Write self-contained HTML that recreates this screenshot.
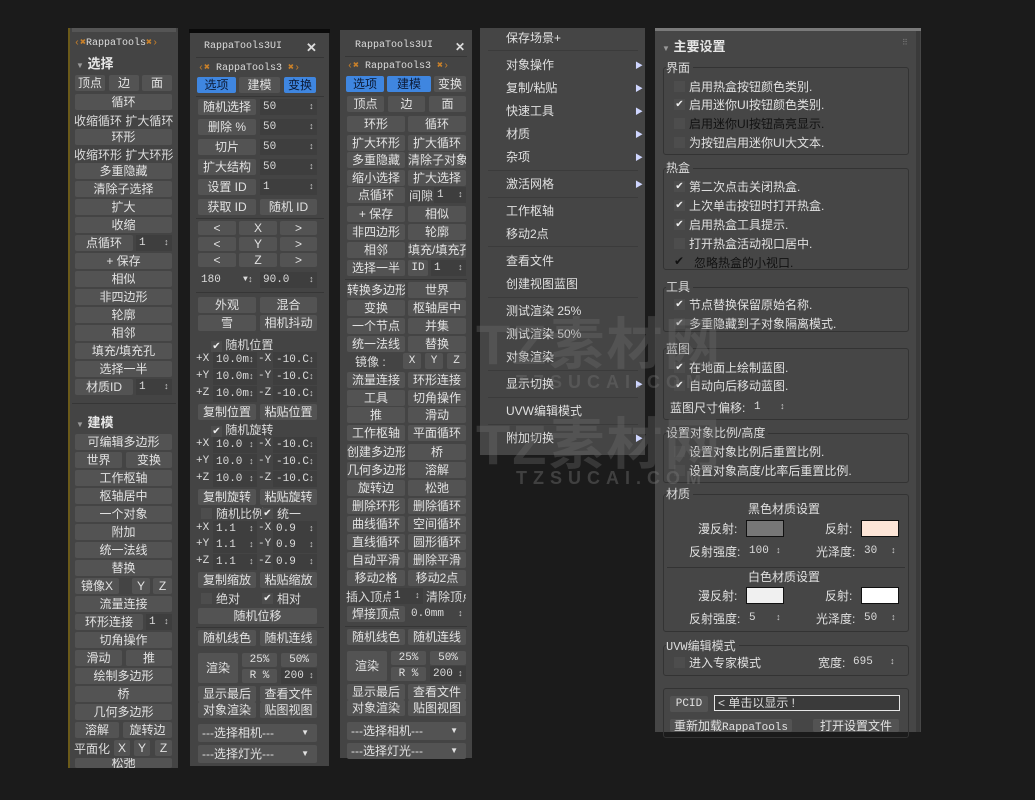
<!DOCTYPE html>
<html><head><meta charset="utf-8">
<style>
*{margin:0;padding:0;box-sizing:border-box}
body{width:1035px;height:800px;background:#1b1b1b;position:relative;overflow:hidden;font-family:"Liberation Sans","Noto Sans CJK SC",sans-serif;font-size:12px;color:#dcdcdc}
.p{position:absolute;background:#444}
.a{position:absolute;white-space:nowrap}
.b{position:absolute;height:16px;background:#535353;border-radius:2px;text-align:center;line-height:16px;white-space:nowrap;overflow:hidden;color:#e2e2e2}
.bl{background:#3f86e0;color:#0c1a35}
.s{position:absolute;height:16px;background:#3e3e3e;line-height:16px;padding-left:3px;white-space:nowrap;overflow:hidden;font-family:"Liberation Mono",monospace;font-size:11px}
.s:after{content:"\2195";position:absolute;right:3px;top:0;font-size:9px;color:#ccc}
.sep{position:absolute;height:1px;background:#363636}
.h{position:absolute;font-weight:bold;font-size:13px;color:#e6e6e6}
.mono{font-family:"Liberation Mono","Noto Sans CJK SC",monospace;font-size:11px}
.g{position:absolute;border:1px solid #333;border-radius:3px}
.gl{position:absolute;background:#464646;padding-right:3px;font-size:12px}
.cb{position:absolute;width:11px;height:11px;background:#4d4d4d;font-size:10px;line-height:11px;text-align:center;color:#eee}
.ci{position:absolute;white-space:nowrap;color:#e0e0e0}
.m{position:absolute;left:506px;font-size:12px;color:#e0e0e0}
.ar{position:absolute;left:635px;font-size:8px;color:#cfd6ff}
.ms{position:absolute;left:488px;width:150px;height:1px;background:#3b3b3b}
</style></head><body>

<!-- Panel 1 -->
<div class="p" style="left:68px;top:28px;width:110px;height:740px"></div>
<div class="a" style="left:68px;top:28px;width:2px;height:740px;background:#6b5a1a"></div>
<div class="a" style="left:72px;top:28px;width:104px;height:4px;background:#555"></div>
<div class="a mono" style="left:74px;top:37px;font-size:10px;color:#ddd"><span style="color:#c8802a">‹✖</span>RappaTools<span style="color:#c8802a">✖›</span></div>
<div class="h" style="left:76px;top:53px"><span style="font-size:8px;color:#999">▼</span> 选择</div>
<div class="b" style="left:75px;top:75px;width:30px">顶点</div><div class="b" style="left:109px;top:75px;width:30px">边</div><div class="b" style="left:142px;top:75px;width:30px">面</div>
<div class="b" style="left:75px;top:94px;width:97px">循环</div>
<div class="a" style="left:74px;top:112px">收缩循环 扩大循环</div>
<div class="b" style="left:75px;top:129px;width:97px">环形</div>
<div class="a" style="left:74px;top:146px">收缩环形 扩大环形</div>
<div class="b" style="left:75px;top:163px;width:97px">多重隐藏</div>
<div class="b" style="left:75px;top:181px;width:97px">清除子选择</div>
<div class="b" style="left:75px;top:199px;width:97px">扩大</div>
<div class="b" style="left:75px;top:217px;width:97px">收缩</div>
<div class="b" style="left:75px;top:235px;width:58px">点循环</div><div class="s" style="left:136px;top:235px;width:36px">1</div>
<div class="b" style="left:75px;top:253px;width:97px">+ 保存</div>
<div class="b" style="left:75px;top:271px;width:97px">相似</div>
<div class="b" style="left:75px;top:289px;width:97px">非四边形</div>
<div class="b" style="left:75px;top:307px;width:97px">轮廓</div>
<div class="b" style="left:75px;top:325px;width:97px">相邻</div>
<div class="b" style="left:75px;top:343px;width:97px">填充/填充孔</div>
<div class="b" style="left:75px;top:361px;width:97px">选择一半</div>
<div class="b" style="left:75px;top:379px;width:58px">材质ID</div><div class="s" style="left:136px;top:379px;width:36px">1</div>
<div class="sep" style="left:72px;top:403px;width:104px"></div>
<div class="h" style="left:76px;top:412px"><span style="font-size:8px;color:#999">▼</span> 建模</div>
<div class="b" style="left:75px;top:434px;width:97px">可编辑多边形</div>
<div class="b" style="left:75px;top:452px;width:47px">世界</div><div class="b" style="left:126px;top:452px;width:46px">变换</div>
<div class="b" style="left:75px;top:470px;width:97px">工作枢轴</div>
<div class="b" style="left:75px;top:488px;width:97px">枢轴居中</div>
<div class="b" style="left:75px;top:506px;width:97px">一个对象</div>
<div class="b" style="left:75px;top:524px;width:97px">附加</div>
<div class="b" style="left:75px;top:542px;width:97px">统一法线</div>
<div class="b" style="left:75px;top:560px;width:97px">替换</div>
<div class="b" style="left:75px;top:578px;width:44px">镜像X</div><div class="b" style="left:132px;top:578px;width:18px">Y</div><div class="b" style="left:153px;top:578px;width:19px">Z</div>
<div class="b" style="left:75px;top:596px;width:97px">流量连接</div>
<div class="b" style="left:75px;top:614px;width:68px">环形连接</div><div class="s" style="left:146px;top:614px;width:26px">1</div>
<div class="b" style="left:75px;top:632px;width:97px">切角操作</div>
<div class="b" style="left:75px;top:650px;width:47px">滑动</div><div class="b" style="left:126px;top:650px;width:46px">推</div>
<div class="b" style="left:75px;top:668px;width:97px">绘制多边形</div>
<div class="b" style="left:75px;top:686px;width:97px">桥</div>
<div class="b" style="left:75px;top:704px;width:97px">几何多边形</div>
<div class="b" style="left:75px;top:722px;width:44px">溶解</div><div class="b" style="left:123px;top:722px;width:49px">旋转边</div>
<div class="a" style="left:74px;top:740px">平面化</div><div class="b" style="left:114px;top:740px;width:16px">X</div><div class="b" style="left:134px;top:740px;width:16px">Y</div><div class="b" style="left:155px;top:740px;width:17px">Z</div>
<div class="b" style="left:75px;top:758px;width:97px;height:10px;line-height:10px">松弛</div>

<!-- Panel 2 -->
<div class="p" style="left:190px;top:30px;width:139px;height:736px"></div>
<div class="a" style="left:189px;top:29px;width:141px;height:4px;background:#0a0a0a"></div>
<div class="a mono" style="left:204px;top:41px;font-size:10px">RappaTools3UI</div>
<div class="a" style="left:306px;top:40px;font-size:13px;font-weight:bold">✕</div>
<div class="sep" style="left:196px;top:57px;width:128px"></div>
<div class="a mono" style="left:198px;top:62px;font-size:10px"><span style="color:#c8802a">‹✖</span> RappaTools3 <span style="color:#c8802a">✖›</span></div>
<div class="b bl" style="left:197px;top:77px;width:39px">选项</div><div class="b" style="left:239px;top:77px;width:41px">建模</div><div class="b bl" style="left:284px;top:77px;width:32px">变换</div>
<div class="sep" style="left:196px;top:96px;width:128px"></div>
<div class="b" style="left:198px;top:99px;width:58px">随机选择</div><div class="s" style="left:260px;top:99px;width:57px">50</div>
<div class="b" style="left:198px;top:119px;width:58px">删除 %</div><div class="s" style="left:260px;top:119px;width:57px">50</div>
<div class="b" style="left:198px;top:139px;width:58px">切片</div><div class="s" style="left:260px;top:139px;width:57px">50</div>
<div class="b" style="left:198px;top:159px;width:58px">扩大结构</div><div class="s" style="left:260px;top:159px;width:57px">50</div>
<div class="b" style="left:198px;top:179px;width:58px">设置 ID</div><div class="s" style="left:260px;top:179px;width:57px">1</div>
<div class="b" style="left:198px;top:199px;width:58px">获取 ID</div><div class="b" style="left:260px;top:199px;width:57px">随机 ID</div>
<div class="sep" style="left:196px;top:218px;width:128px"></div>
<div class="b" style="left:198px;top:221px;width:38px;height:14px;line-height:14px">&lt;</div><div class="b" style="left:239px;top:221px;width:38px;height:14px;line-height:14px">X</div><div class="b" style="left:280px;top:221px;width:37px;height:14px;line-height:14px">&gt;</div>
<div class="b" style="left:198px;top:237px;width:38px;height:14px;line-height:14px">&lt;</div><div class="b" style="left:239px;top:237px;width:38px;height:14px;line-height:14px">Y</div><div class="b" style="left:280px;top:237px;width:37px;height:14px;line-height:14px">&gt;</div>
<div class="b" style="left:198px;top:253px;width:38px;height:14px;line-height:14px">&lt;</div><div class="b" style="left:239px;top:253px;width:38px;height:14px;line-height:14px">Z</div><div class="b" style="left:280px;top:253px;width:37px;height:14px;line-height:14px">&gt;</div>
<div class="s" style="left:198px;top:272px;width:58px;background:#444">180 <span style="position:absolute;left:45px;font-size:8px">▼</span></div><div class="s" style="left:260px;top:272px;width:57px">90.0</div>
<div class="sep" style="left:196px;top:292px;width:128px"></div>
<div class="b" style="left:198px;top:297px;width:58px">外观</div><div class="b" style="left:260px;top:297px;width:57px">混合</div>
<div class="b" style="left:198px;top:315px;width:58px">雪</div><div class="b" style="left:260px;top:315px;width:57px">相机抖动</div>
<div class="a" style="left:211px;top:336px"><span class="cb" style="position:relative;display:inline-block">✔</span> 随机位置</div>
<div class="a mono" style="left:196px;top:353px">+X</div><div class="s" style="left:213px;top:352px;width:44px">10.0m</div><div class="a mono" style="left:258px;top:353px">-X</div><div class="s" style="left:273px;top:352px;width:44px">-10.C</div>
<div class="a mono" style="left:196px;top:370px">+Y</div><div class="s" style="left:213px;top:369px;width:44px">10.0m</div><div class="a mono" style="left:258px;top:370px">-Y</div><div class="s" style="left:273px;top:369px;width:44px">-10.C</div>
<div class="a mono" style="left:196px;top:387px">+Z</div><div class="s" style="left:213px;top:386px;width:44px">10.0m</div><div class="a mono" style="left:258px;top:387px">-Z</div><div class="s" style="left:273px;top:386px;width:44px">-10.C</div>
<div class="b" style="left:198px;top:404px;width:58px">复制位置</div><div class="b" style="left:260px;top:404px;width:57px">粘贴位置</div>
<div class="a" style="left:211px;top:421px"><span class="cb" style="position:relative;display:inline-block">✔</span> 随机旋转</div>
<div class="a mono" style="left:196px;top:438px">+X</div><div class="s" style="left:213px;top:437px;width:44px">10.0</div><div class="a mono" style="left:258px;top:438px">-X</div><div class="s" style="left:273px;top:437px;width:44px">-10.C</div>
<div class="a mono" style="left:196px;top:455px">+Y</div><div class="s" style="left:213px;top:454px;width:44px">10.0</div><div class="a mono" style="left:258px;top:455px">-Y</div><div class="s" style="left:273px;top:454px;width:44px">-10.C</div>
<div class="a mono" style="left:196px;top:472px">+Z</div><div class="s" style="left:213px;top:471px;width:44px">10.0</div><div class="a mono" style="left:258px;top:472px">-Z</div><div class="s" style="left:273px;top:471px;width:44px">-10.C</div>
<div class="b" style="left:198px;top:489px;width:58px">复制旋转</div><div class="b" style="left:260px;top:489px;width:57px">粘贴旋转</div>
<div class="cb" style="left:201px;top:508px"></div><div class="a" style="left:216px;top:505px">随机比例</div><div class="cb" style="left:262px;top:508px">✔</div><div class="a" style="left:277px;top:505px">统一</div>
<div class="a mono" style="left:196px;top:522px">+X</div><div class="s" style="left:213px;top:521px;width:44px">1.1</div><div class="a mono" style="left:258px;top:522px">-X</div><div class="s" style="left:273px;top:521px;width:44px">0.9</div>
<div class="a mono" style="left:196px;top:538px">+Y</div><div class="s" style="left:213px;top:537px;width:44px">1.1</div><div class="a mono" style="left:258px;top:538px">-Y</div><div class="s" style="left:273px;top:537px;width:44px">0.9</div>
<div class="a mono" style="left:196px;top:555px">+Z</div><div class="s" style="left:213px;top:554px;width:44px">1.1</div><div class="a mono" style="left:258px;top:555px">-Z</div><div class="s" style="left:273px;top:554px;width:44px">0.9</div>
<div class="b" style="left:198px;top:572px;width:58px">复制缩放</div><div class="b" style="left:260px;top:572px;width:57px">粘贴缩放</div>
<div class="cb" style="left:201px;top:593px"></div><div class="a" style="left:216px;top:590px">绝对</div><div class="cb" style="left:262px;top:593px">✔</div><div class="a" style="left:277px;top:590px">相对</div>
<div class="b" style="left:198px;top:608px;width:119px">随机位移</div>
<div class="sep" style="left:196px;top:627px;width:128px"></div>
<div class="b" style="left:198px;top:630px;width:58px">随机线色</div><div class="b" style="left:260px;top:630px;width:57px">随机连线</div>
<div class="b" style="left:198px;top:653px;width:40px;height:30px;line-height:30px">渲染</div>
<div class="b mono" style="left:242px;top:653px;width:35px;height:14px;line-height:14px">25%</div><div class="b mono" style="left:281px;top:653px;width:36px;height:14px;line-height:14px">50%</div>
<div class="b mono" style="left:242px;top:669px;width:35px;height:14px;line-height:14px">R %</div><div class="s" style="left:281px;top:668px;width:36px">200</div>
<div class="b" style="left:198px;top:686px;width:58px">显示最后</div><div class="b" style="left:260px;top:686px;width:57px">查看文件</div>
<div class="b" style="left:198px;top:702px;width:58px">对象渲染</div><div class="b" style="left:260px;top:702px;width:57px">贴图视图</div>
<div class="b" style="left:198px;top:724px;width:119px;height:18px;line-height:18px;text-align:left;padding-left:4px">---选择相机---<span style="position:absolute;right:8px;font-size:8px">▼</span></div>
<div class="b" style="left:198px;top:745px;width:119px;height:18px;line-height:18px;text-align:left;padding-left:4px">---选择灯光---<span style="position:absolute;right:8px;font-size:8px">▼</span></div>

<!-- Panel 3 -->
<div class="p" style="left:340px;top:30px;width:132px;height:728px"></div>
<div class="a mono" style="left:355px;top:40px;font-size:10px">RappaTools3UI</div>
<div class="a" style="left:455px;top:40px;font-size:12px;font-weight:bold">✕</div>
<div class="sep" style="left:345px;top:56px;width:122px"></div>
<div class="a mono" style="left:347px;top:60px;font-size:10px"><span style="color:#c8802a">‹✖</span> RappaTools3 <span style="color:#c8802a">✖›</span></div>
<div class="b bl" style="left:346px;top:76px;width:38px">选项</div><div class="b bl" style="left:387px;top:76px;width:44px">建模</div><div class="b" style="left:434px;top:76px;width:32px">变换</div>
<div class="b" style="left:347px;top:96px;width:37px">顶点</div><div class="b" style="left:388px;top:96px;width:37px">边</div><div class="b" style="left:429px;top:96px;width:37px">面</div>
<div class="b" style="left:347px;top:116px;width:58px">环形</div><div class="b" style="left:408px;top:116px;width:58px">循环</div>
<div class="b" style="left:347px;top:135px;width:58px">扩大环形</div><div class="b" style="left:408px;top:135px;width:58px">扩大循环</div>
<div class="b" style="left:347px;top:152px;width:58px">多重隐藏</div><div class="b" style="left:408px;top:152px;width:58px">清除子对象</div>
<div class="b" style="left:347px;top:170px;width:58px">缩小选择</div><div class="b" style="left:408px;top:170px;width:58px">扩大选择</div>
<div class="b" style="left:347px;top:187px;width:58px">点循环</div><div class="a" style="left:409px;top:187px">间隙</div><div class="s" style="left:434px;top:187px;width:32px">1</div>
<div class="b" style="left:347px;top:206px;width:58px">+ 保存</div><div class="b" style="left:408px;top:206px;width:58px">相似</div>
<div class="b" style="left:347px;top:224px;width:58px">非四边形</div><div class="b" style="left:408px;top:224px;width:58px">轮廓</div>
<div class="b" style="left:347px;top:242px;width:58px">相邻</div><div class="b" style="left:408px;top:242px;width:58px">填充/填充孔</div>
<div class="b" style="left:347px;top:260px;width:58px">选择一半</div><div class="b mono" style="left:408px;top:260px;width:20px">ID</div><div class="s" style="left:431px;top:260px;width:35px">1</div>
<div class="sep" style="left:345px;top:279px;width:122px"></div>
<div class="b" style="left:347px;top:282px;width:58px">转换多边形</div><div class="b" style="left:408px;top:282px;width:58px">世界</div>
<div class="b" style="left:347px;top:300px;width:58px">变换</div><div class="b" style="left:408px;top:300px;width:58px">枢轴居中</div>
<div class="b" style="left:347px;top:318px;width:58px">一个节点</div><div class="b" style="left:408px;top:318px;width:58px">并集</div>
<div class="b" style="left:347px;top:336px;width:58px">统一法线</div><div class="b" style="left:408px;top:336px;width:58px">替换</div>
<div class="a" style="left:355px;top:353px">镜像 :</div><div class="b mono" style="left:403px;top:353px;width:18px">X</div><div class="b mono" style="left:425px;top:353px;width:18px">Y</div><div class="b mono" style="left:447px;top:353px;width:19px">Z</div>
<div class="b" style="left:347px;top:372px;width:58px">流量连接</div><div class="b" style="left:408px;top:372px;width:58px">环形连接</div>
<div class="b" style="left:347px;top:390px;width:58px">工具</div><div class="b" style="left:408px;top:390px;width:58px">切角操作</div>
<div class="b" style="left:347px;top:407px;width:58px">推</div><div class="b" style="left:408px;top:407px;width:58px">滑动</div>
<div class="b" style="left:347px;top:425px;width:58px">工作枢轴</div><div class="b" style="left:408px;top:425px;width:58px">平面循环</div>
<div class="b" style="left:347px;top:444px;width:58px">创建多边形</div><div class="b" style="left:408px;top:444px;width:58px">桥</div>
<div class="b" style="left:347px;top:462px;width:58px">几何多边形</div><div class="b" style="left:408px;top:462px;width:58px">溶解</div>
<div class="b" style="left:347px;top:480px;width:58px">旋转边</div><div class="b" style="left:408px;top:480px;width:58px">松弛</div>
<div class="b" style="left:347px;top:498px;width:58px">删除环形</div><div class="b" style="left:408px;top:498px;width:58px">删除循环</div>
<div class="b" style="left:347px;top:516px;width:58px">曲线循环</div><div class="b" style="left:408px;top:516px;width:58px">空间循环</div>
<div class="b" style="left:347px;top:534px;width:58px">直线循环</div><div class="b" style="left:408px;top:534px;width:58px">圆形循环</div>
<div class="b" style="left:347px;top:552px;width:58px">自动平滑</div><div class="b" style="left:408px;top:552px;width:58px">删除平滑</div>
<div class="b" style="left:347px;top:570px;width:58px">移动2格</div><div class="b" style="left:408px;top:570px;width:58px">移动2点</div>
<div class="a" style="left:346px;top:588px">插入顶点</div><div class="s" style="left:391px;top:588px;width:32px">1</div><div class="a" style="left:426px;top:588px;width:40px;overflow:hidden">清除顶点</div>
<div class="b" style="left:347px;top:606px;width:58px">焊接顶点</div><div class="s" style="left:408px;top:606px;width:58px;background:#444">0.0mm</div>
<div class="sep" style="left:345px;top:626px;width:122px"></div>
<div class="b" style="left:347px;top:629px;width:58px">随机线色</div><div class="b" style="left:408px;top:629px;width:58px">随机连线</div>
<div class="b" style="left:347px;top:651px;width:40px;height:30px;line-height:30px">渲染</div>
<div class="b mono" style="left:391px;top:651px;width:35px;height:14px;line-height:14px">25%</div><div class="b mono" style="left:430px;top:651px;width:36px;height:14px;line-height:14px">50%</div>
<div class="b mono" style="left:391px;top:667px;width:35px;height:14px;line-height:14px">R %</div><div class="s" style="left:430px;top:666px;width:36px">200</div>
<div class="b" style="left:347px;top:684px;width:58px">显示最后</div><div class="b" style="left:408px;top:684px;width:58px">查看文件</div>
<div class="b" style="left:347px;top:700px;width:58px">对象渲染</div><div class="b" style="left:408px;top:700px;width:58px">贴图视图</div>
<div class="b" style="left:347px;top:722px;width:119px;height:18px;line-height:18px;text-align:left;padding-left:4px">---选择相机---<span style="position:absolute;right:8px;font-size:8px">▼</span></div>
<div class="b" style="left:347px;top:743px;width:119px;height:16px;line-height:16px;text-align:left;padding-left:4px">---选择灯光---<span style="position:absolute;right:8px;font-size:8px">▼</span></div>

<!-- Panel 4 menu -->
<div class="p" style="left:480px;top:28px;width:165px;height:427px;background:#454545"></div>
<div class="m" style="top:29px">保存场景+</div>
<div class="ms" style="top:50px"></div>
<div class="m" style="top:56px">对象操作</div><div class="ar" style="top:60px">▶</div>
<div class="m" style="top:79px">复制/粘贴</div><div class="ar" style="top:83px">▶</div>
<div class="m" style="top:102px">快速工具</div><div class="ar" style="top:106px">▶</div>
<div class="m" style="top:125px">材质</div><div class="ar" style="top:129px">▶</div>
<div class="m" style="top:148px">杂项</div><div class="ar" style="top:152px">▶</div>
<div class="ms" style="top:170px"></div>
<div class="m" style="top:175px">激活网格</div><div class="ar" style="top:179px">▶</div>
<div class="ms" style="top:197px"></div>
<div class="m" style="top:202px">工作枢轴</div>
<div class="m" style="top:225px">移动2点</div>
<div class="ms" style="top:246px"></div>
<div class="m" style="top:252px">查看文件</div>
<div class="m" style="top:275px">创建视图蓝图</div>
<div class="ms" style="top:297px"></div>
<div class="m" style="top:302px">测试渲染 25%</div>
<div class="m" style="top:325px">测试渲染 50%</div>
<div class="m" style="top:348px">对象渲染</div>
<div class="ms" style="top:370px"></div>
<div class="m" style="top:375px">显示切换</div><div class="ar" style="top:379px">▶</div>
<div class="ms" style="top:397px"></div>
<div class="m" style="top:402px">UVW编辑模式</div>
<div class="ms" style="top:424px"></div>
<div class="m" style="top:429px">附加切换</div><div class="ar" style="top:433px">▶</div>

<!-- Panel 5 -->
<div class="p" style="left:655px;top:28px;width:266px;height:704px;background:#464646"></div>
<div class="a" style="left:655px;top:28px;width:266px;height:3px;background:#7a7a7a"></div>
<div class="a" style="left:916px;top:31px;width:4px;height:701px;background:#3a3a3a"></div>
<div class="h" style="left:662px;top:36px"><span style="font-size:8px;color:#999">▼</span> 主要设置</div>
<div class="a" style="left:902px;top:38px;font-size:8px;color:#777">⠿</div>

<div class="g" style="left:663px;top:67px;width:246px;height:88px"></div><div class="gl" style="left:666px;top:59px">界面</div>
<div class="cb" style="left:674px;top:81px"></div><div class="ci" style="left:689px;top:78px">启用热盒按钮颜色类别.</div>
<div class="cb" style="left:674px;top:99px">✔</div><div class="ci" style="left:689px;top:96px">启用迷你UI按钮颜色类别.</div>
<div class="cb" style="left:674px;top:118px"></div><div class="ci" style="left:689px;top:115px;color:#111">启用迷你UI按钮高亮显示.</div>
<div class="cb" style="left:674px;top:137px"></div><div class="ci" style="left:689px;top:134px">为按钮启用迷你UI大文本.</div>

<div class="g" style="left:663px;top:168px;width:246px;height:102px"></div><div class="gl" style="left:666px;top:159px">热盒</div>
<div class="cb" style="left:674px;top:181px">✔</div><div class="ci" style="left:689px;top:178px">第二次点击关闭热盒.</div>
<div class="cb" style="left:674px;top:200px">✔</div><div class="ci" style="left:689px;top:197px">上次单击按钮时打开热盒.</div>
<div class="cb" style="left:674px;top:219px">✔</div><div class="ci" style="left:689px;top:216px">启用热盒工具提示.</div>
<div class="cb" style="left:674px;top:238px"></div><div class="ci" style="left:689px;top:235px">打开热盒活动视口居中.</div>
<div class="a" style="left:674px;top:254px;color:#111">✔</div><div class="ci" style="left:694px;top:254px;color:#111">忽略热盒的小视口.</div>

<div class="g" style="left:663px;top:287px;width:246px;height:45px"></div><div class="gl" style="left:666px;top:278px">工具</div>
<div class="cb" style="left:674px;top:299px">✔</div><div class="ci" style="left:689px;top:296px">节点替换保留原始名称.</div>
<div class="cb" style="left:674px;top:318px">✔</div><div class="ci" style="left:689px;top:315px">多重隐藏到子对象隔离模式.</div>

<div class="g" style="left:663px;top:348px;width:246px;height:72px"></div><div class="gl" style="left:666px;top:340px">蓝图</div>
<div class="cb" style="left:674px;top:362px">✔</div><div class="ci" style="left:689px;top:359px">在地面上绘制蓝图.</div>
<div class="cb" style="left:674px;top:380px">✔</div><div class="ci" style="left:689px;top:377px">自动向后移动蓝图.</div>
<div class="ci" style="left:670px;top:399px">蓝图尺寸偏移:</div><div class="s" style="left:751px;top:399px;width:37px;background:#464646">1</div>

<div class="g" style="left:663px;top:433px;width:246px;height:50px"></div><div class="gl" style="left:666px;top:424px">设置对象比例/高度</div>
<div class="cb" style="left:674px;top:446px"></div><div class="ci" style="left:689px;top:443px">设置对象比例后重置比例.</div>
<div class="cb" style="left:674px;top:465px"></div><div class="ci" style="left:689px;top:462px">设置对象高度/比率后重置比例.</div>

<div class="g" style="left:663px;top:494px;width:246px;height:138px"></div><div class="gl" style="left:666px;top:485px">材质</div>
<div class="ci" style="left:748px;top:500px">黑色材质设置</div>
<div class="ci" style="left:698px;top:520px">漫反射:</div><div class="a" style="left:746px;top:520px;width:38px;height:17px;background:#777;border:1px solid #111"></div>
<div class="ci" style="left:825px;top:520px">反射:</div><div class="a" style="left:861px;top:520px;width:38px;height:17px;background:#fde5d7;border:1px solid #111"></div>
<div class="ci" style="left:689px;top:543px">反射强度:</div><div class="s" style="left:746px;top:543px;width:38px;background:#464646">100</div>
<div class="ci" style="left:816px;top:543px">光泽度:</div><div class="s" style="left:861px;top:543px;width:38px;background:#464646">30</div>
<div class="sep" style="left:667px;top:567px;width:238px;background:#333"></div>
<div class="ci" style="left:748px;top:568px">白色材质设置</div>
<div class="ci" style="left:698px;top:587px">漫反射:</div><div class="a" style="left:746px;top:587px;width:38px;height:17px;background:#f0f0f0;border:1px solid #111"></div>
<div class="ci" style="left:825px;top:587px">反射:</div><div class="a" style="left:861px;top:587px;width:38px;height:17px;background:#fff;border:1px solid #111"></div>
<div class="ci" style="left:689px;top:610px">反射强度:</div><div class="s" style="left:746px;top:610px;width:38px;background:#464646">5</div>
<div class="ci" style="left:816px;top:610px">光泽度:</div><div class="s" style="left:861px;top:610px;width:38px;background:#464646">50</div>

<div class="g" style="left:663px;top:645px;width:246px;height:31px"></div><div class="gl mono" style="left:666px;top:637px">UVW编辑模式</div>
<div class="cb" style="left:674px;top:657px"></div><div class="ci" style="left:689px;top:654px">进入专家模式</div>
<div class="ci" style="left:818px;top:654px">宽度:</div><div class="s" style="left:850px;top:654px;width:48px;background:#464646">695</div>

<div class="g" style="left:663px;top:688px;width:246px;height:50px"></div>
<div class="b mono" style="left:670px;top:696px;width:38px">PCID</div>
<div class="a" style="left:714px;top:695px;width:186px;height:16px;border:1px solid #e8e8e8;background:#3a3a3a;line-height:14px;padding-left:3px">&lt; 单击以显示 !</div>
<div class="b" style="left:670px;top:719px;width:122px;height:13px;line-height:14px">重新加载<span class="mono">RappaTools</span></div>
<div class="b" style="left:813px;top:719px;width:86px;height:13px;line-height:14px">打开设置文件</div>

<!-- watermark -->
<div class="a" style="left:476px;top:300px;font-size:56px;font-weight:bold;color:rgba(110,110,110,0.35);letter-spacing:2px">TZ素材网</div>
<div class="a" style="left:516px;top:372px;font-size:18px;font-weight:bold;color:rgba(120,120,120,0.35);letter-spacing:6px">TZSUCAI.COM</div>
<div class="a" style="left:476px;top:400px;font-size:56px;font-weight:bold;color:rgba(110,110,110,0.35);letter-spacing:2px">TZ素材网</div>
<div class="a" style="left:516px;top:468px;font-size:18px;font-weight:bold;color:rgba(120,120,120,0.4);letter-spacing:6px">TZSUCAI.COM</div>
</body></html>
